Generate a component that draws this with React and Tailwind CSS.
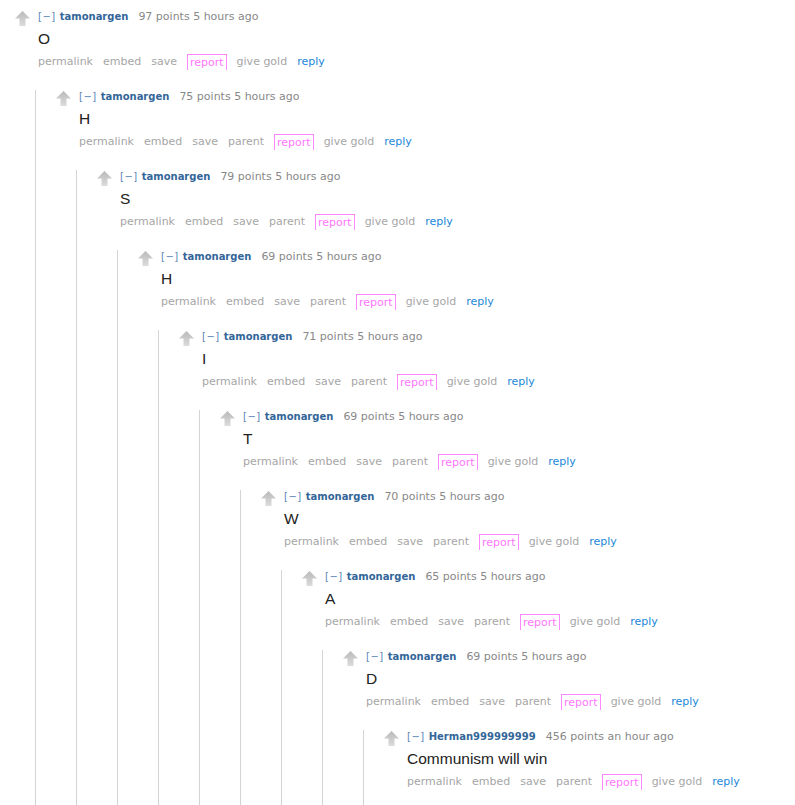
import React from 'react';

const comments = [
  { author: 'tamonargen', points: 97, time: '5 hours ago', body: 'O' },
  { author: 'tamonargen', points: 75, time: '5 hours ago', body: 'H' },
  { author: 'tamonargen', points: 79, time: '5 hours ago', body: 'S' },
  { author: 'tamonargen', points: 69, time: '5 hours ago', body: 'H' },
  { author: 'tamonargen', points: 71, time: '5 hours ago', body: 'I' },
  { author: 'tamonargen', points: 69, time: '5 hours ago', body: 'T' },
  { author: 'tamonargen', points: 70, time: '5 hours ago', body: 'W' },
  { author: 'tamonargen', points: 65, time: '5 hours ago', body: 'A' },
  { author: 'tamonargen', points: 69, time: '5 hours ago', body: 'D' },
  { author: 'Herman999999999', points: 456, time: 'an hour ago', body: 'Communism will win' },
];

function UpArrow() {
  return (
    <svg width="15" height="15" viewBox="0 0 15 15">
      <defs>
        <linearGradient id="arrowFill" x1="0" y1="0" x2="0" y2="1">
          <stop offset="0" stopColor="#b9b9b9" />
          <stop offset="1" stopColor="#dcdcdc" />
        </linearGradient>
      </defs>
      <path d="M7.5 0 L15 7.5 L10.5 7.5 L10.5 15 L4.5 15 L4.5 7.5 L0 7.5 Z" fill="url(#arrowFill)" />
    </svg>
  );
}

function Comment({ index }) {
  const c = comments[index];
  const hasChild = index + 1 < comments.length;
  const isLast = !hasChild;

  return (
    <div className={`flex ${isLast ? 'pb-[60px]' : ''}`}>
      <div className="w-[23px] shrink-0 pt-[1px]">
        <UpArrow />
      </div>
      <div className="flex-1 min-w-0">
        {/* tagline */}
        <div className="flex items-baseline h-[14px] leading-[14px] font-['DejaVu_Sans',sans-serif] whitespace-nowrap">
          <span className="text-[10px] tracking-[0.5px] text-[#5b86b8]">[−]</span>
          <span className="ml-[4px] text-[10px] font-bold text-[#336699]">{c.author}</span>
          <span className="ml-[10px] text-[11px] text-[#888]">
            {c.points} points {c.time}
          </span>
        </div>

        {/* body */}
        <div className="mt-[5px] leading-[20px] text-[15.5px] text-[#222] font-['Liberation_Sans',Arial,sans-serif]">
          {c.body}
        </div>

        {/* buttons */}
        <div className="mt-[6px] flex items-start gap-[10px] h-[15px] text-[11px] leading-[14px] text-[#a6a6a6] font-['DejaVu_Sans',sans-serif] whitespace-nowrap">
          <span>permalink</span>
          <span>embed</span>
          <span>save</span>
          {index > 0 && <span>parent</span>}
          <span className="-mt-[1px] border border-b-0 border-[#ff88ff] px-[2px] h-[16px] leading-[16px] text-[#ff77ff]">report</span>
          <span>give gold</span>
          <span className="text-[#1a87d9]">reply</span>
        </div>

        {hasChild && (
          <div className="-ml-[3px] mt-[20px] border-l border-[#d4d4d4] pl-[20px]">
            <Comment index={index + 1} />
          </div>
        )}
      </div>
    </div>
  );
}

export default function App() {
  return (
    <div className="h-[805px] overflow-hidden bg-white pl-[15px] pt-[10px]">
      <Comment index={0} />
    </div>
  );
}
